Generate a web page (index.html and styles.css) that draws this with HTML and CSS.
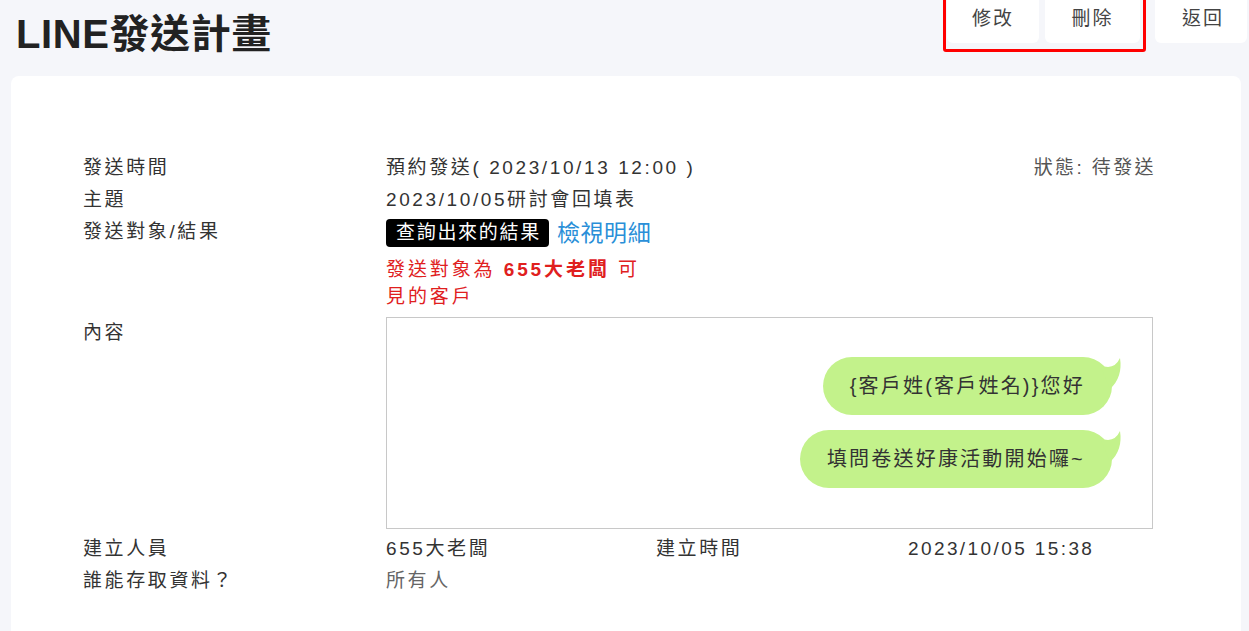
FILE: index.html
```html
<!DOCTYPE html>
<html lang="zh-Hant">
<head>
<meta charset="utf-8">
<title>LINE發送計畫</title>
<link rel="stylesheet" href="styles.css">
</head>
<body>
<header class="page-head">
  <h1 class="title">LINE發送計畫</h1>
  <div class="actions">
    <button class="btn btn-edit">修改</button>
    <button class="btn btn-del">刪除</button>
    <button class="btn btn-back">返回</button>
    <span class="highlight"></span>
  </div>
</header>
<main class="card">
  <div class="row row-top">
    <div class="label">發送時間</div>
    <div class="value">預約發送( 2023/10/13 12:00 )</div>
    <div class="status">狀態: 待發送</div>
  </div>
  <div class="row">
    <div class="label">主題</div>
    <div class="value">2023/10/05研討會回填表</div>
  </div>
  <div class="row">
    <div class="label">發送對象/結果</div>
    <div class="value">
      <div class="target-line"><span class="badge">查詢出來的結果</span><a class="link" href="#">檢視明細</a></div>
      <p class="warn">發送對象為 <b>655大老闆</b> 可見的客戶</p>
    </div>
  </div>
  <div class="row row-content">
    <div class="label">內容</div>
    <div class="preview">
      <div class="bubble">{客戶姓(客戶姓名)}您好<svg class="tail" viewBox="0 0 28 36" width="28" height="36"><path d="M4 8 Q18 14 24 1 Q27 20 14 32 Z" fill="#c3f28b"/></svg></div>
      <div class="bubble">填問卷送好康活動開始囉~<svg class="tail" viewBox="0 0 28 36" width="28" height="36"><path d="M4 8 Q18 14 24 1 Q27 20 14 32 Z" fill="#c3f28b"/></svg></div>
    </div>
  </div>
  <div class="row row-meta">
    <div class="label">建立人員</div>
    <div class="value">655大老闆</div>
    <div class="value">建立時間</div>
    <div class="value">2023/10/05 15:38</div>
  </div>
  <div class="row">
    <div class="label">誰能存取資料？</div>
    <div class="value muted">所有人</div>
  </div>
</main>
</body>
</html>
```
FILE: styles.css
```css
html, body {
  margin: 0;
  padding: 0;
}
body {
  background: #f5f6fa;
  font-family: "Liberation Sans", "Noto Sans CJK TC", sans-serif;
  color: #333;
  overflow: hidden;
}
.page-head {
  display: flex;
  justify-content: space-between;
  align-items: flex-start;
  height: 76px;
  padding-left: 16px;
}
.title {
  margin: 12px 0 0;
  font-size: 40px;
  line-height: 44px;
  font-weight: 700;
  color: #222;
  letter-spacing: 0.6px;
}
.actions {
  position: relative;
  display: flex;
  align-items: flex-start;
  padding-right: 2px;
}
.btn {
  border: none;
  background: #fff;
  font-family: inherit;
  font-size: 19px;
  color: #444;
  letter-spacing: 2px;
  height: 43px;
  padding: 6px 0 0;
  line-height: 26px;
  border-radius: 0 0 6px 6px;
  display: flex;
  justify-content: center;
  align-items: flex-start;
}
.btn-edit { width: 92px; margin-right: 6px; }
.btn-del { width: 95px; margin-right: 15px; }
.btn-back { width: 92px; padding-left: 4px; }
.highlight {
  position: absolute;
  left: -4px;
  top: -6px;
  width: 197px;
  height: 52px;
  border: 3px solid #f00;
  border-radius: 3px;
  pointer-events: none;
}
.card {
  background: #fff;
  margin: 0 8px 0 11px;
  border-radius: 8px;
  padding: 76px 85px 40px 72px;
  min-height: 600px;
  font-size: 19px;
  letter-spacing: 2.6px;
}
.row {
  display: grid;
  grid-template-columns: 303px 1fr;
  line-height: 32px;
}
.row-top {
  grid-template-columns: 303px 1fr auto;
}
.status {
  color: #555;
  letter-spacing: 2.4px;
}
.label {
  color: #333;
}
.target-line {
  display: flex;
  align-items: center;
  height: 34px;
}
.badge {
  background: #000;
  color: #fff;
  border-radius: 4px;
  padding: 0 8px 0 10px;
  line-height: 28px;
  height: 28px;
  font-size: 19px;
  letter-spacing: 1.7px;
}
.link {
  color: #2a8fd8;
  text-decoration: none;
  font-size: 23px;
  letter-spacing: 0.6px;
  margin-left: 8px;
}
.warn {
  margin: 6px 0 0;
  width: 268px;
  color: #e0201e;
  line-height: 27px;
  letter-spacing: 2.9px;
}
.warn b {
  font-weight: 700;
}
.row-content {
  margin-top: 7px;
}
.preview {
  border: 1px solid #c8c8c8;
  height: 171px;
  padding: 39px 40px 0 0;
  margin-right: 3px;
  display: flex;
  flex-direction: column;
  align-items: flex-end;
  gap: 15px;
}
.bubble {
  position: relative;
  background: #c3f28b;
  border-radius: 29px;
  height: 58px;
  line-height: 58px;
  padding: 0 27px 0 27px;
  color: #333;
  font-size: 20px;
  letter-spacing: 2.2px;
  white-space: nowrap;
}
.tail {
  position: absolute;
  right: -12px;
  top: 0;
}
.row-meta {
  grid-template-columns: 303px 270px 252px 1fr;
  margin-top: 4px;
}
.row-meta .value:last-child {
  letter-spacing: 2.4px;
}
.muted {
  color: #666;
}
```
